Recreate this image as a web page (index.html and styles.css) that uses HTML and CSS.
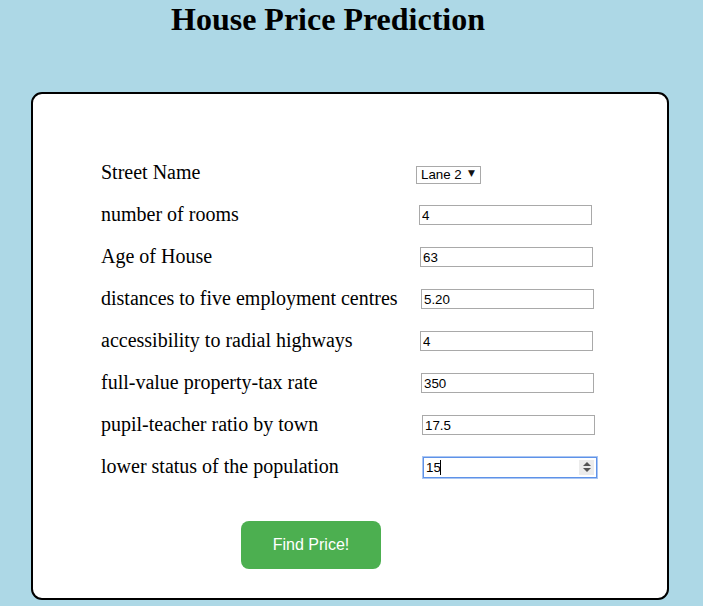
FILE: index.html
```html
<!DOCTYPE html>
<html lang="en">
<head>
<meta charset="utf-8">
<title>House Price Prediction</title>
<link rel="stylesheet" href="styles.css">
</head>
<body>
<h1 class="title">House Price Prediction</h1>
<div class="card">
  <form class="form">
    <div class="row">
      <label class="label">Street Name</label>
      <span class="select-wrap">
        <select class="select"><option>Lane 2</option></select>
        <span class="select-arrow">&#9660;</span>
      </span>
    </div>
    <div class="row">
      <label class="label">number of rooms</label>
      <input class="field s0" type="text" value="4">
    </div>
    <div class="row">
      <label class="label">Age of House</label>
      <input class="field s1" type="text" value="63">
    </div>
    <div class="row">
      <label class="label">distances to five employment centres</label>
      <input class="field s2" type="text" value="5.20">
    </div>
    <div class="row">
      <label class="label">accessibility to radial highways</label>
      <input class="field s1" type="text" value="4">
    </div>
    <div class="row">
      <label class="label">full-value property-tax rate</label>
      <input class="field s2" type="text" value="350">
    </div>
    <div class="row">
      <label class="label">pupil-teacher ratio by town</label>
      <input class="field s3" type="text" value="17.5">
    </div>
    <div class="row">
      <label class="label">lower status of the population</label>
      <span class="focus-wrap s4">
        <input class="field focused" type="text" value="15">
        <span class="caret"></span>
        <span class="spinner"><span class="up"></span><span class="down"></span></span>
      </span>
    </div>
    <div class="actions">
      <button class="btn" type="button">Find Price!</button>
    </div>
  </form>
</div>
</body>
</html>
```
FILE: styles.css
```css
html, body {
  margin: 0;
  padding: 0;
}
body {
  background: #add8e6;
  font-family: "Liberation Serif", "Times New Roman", serif;
  color: #000;
  width: 703px;
  height: 606px;
  overflow: hidden;
}
.title {
  width: 640px;
  margin: 0 0 0 8px;
  padding-top: 1px;
  text-align: center;
  font-size: 32px;
  line-height: 37px;
  font-weight: bold;
}
.card {
  box-sizing: border-box;
  width: 638px;
  height: 508px;
  margin: 54px 0 0 31px;
  border: 2px solid #000;
  border-radius: 11px;
  background: #fff;
  padding: 58px 0 0 68px;
}
.form {
  display: flex;
  flex-direction: column;
}
.row {
  display: grid;
  grid-template-columns: 316px auto;
  align-items: center;
  height: 42px;
}
.label {
  font-size: 20px;
  line-height: 22px;
  margin-top: -2px;
}
.select-wrap {
  position: relative;
  display: inline-block;
  width: 65px;
  height: 18px;
  margin-left: -1px;
  margin-top: 2px;
}
.select {
  -webkit-appearance: none;
  appearance: none;
  box-sizing: border-box;
  width: 65px;
  height: 18px;
  border: 1px solid #a9a9a9;
  border-radius: 0;
  background: #fff;
  font-family: "Liberation Sans", Arial, sans-serif;
  font-size: 13.33px;
  color: #000;
  padding: 0 0 0 4px;
  margin: 0;
  line-height: 16px;
}
.select-arrow {
  position: absolute;
  right: 6px;
  top: 3px;
  font-size: 9px;
  line-height: 10px;
  color: #111;
  font-family: "DejaVu Sans", sans-serif;
  pointer-events: none;
}
.field {
  box-sizing: border-box;
  width: 173px;
  height: 20px;
  border: 1px solid #a9a9a9;
  padding: 0 2px;
  margin: 0;
  font-family: "Liberation Sans", Arial, sans-serif;
  font-size: 13.33px;
  color: #000;
  background: #fff;
  outline: none;
}
.s0 { margin-left: 2px; }
.s1 { margin-left: 3px; }
.s2 { margin-left: 4px; }
.s3 { margin-left: 5px; }
.s4 { margin-left: 6px; }
.focus-wrap {
  position: relative;
  display: inline-block;
  width: 174px;
  height: 21px;
  margin-top: 0;
}
.focus-wrap .field.focused {
  width: 174px;
  height: 21px;
  margin: 0;
  border: 1px solid #5e92e8;
  box-shadow: 0 0 0 1px #aac6f3;
}
.caret {
  position: absolute;
  left: 17px;
  top: 3px;
  width: 1px;
  height: 15px;
  background: #000;
}
.spinner {
  position: absolute;
  right: 3px;
  top: 3px;
  width: 15px;
  height: 15px;
  background: #ececec;
  display: flex;
  flex-direction: column;
  align-items: center;
  justify-content: center;
  gap: 2px;
}
.up {
  width: 0;
  height: 0;
  border-left: 4px solid transparent;
  border-right: 4px solid transparent;
  border-bottom: 4px solid #555;
}
.down {
  width: 0;
  height: 0;
  border-left: 4px solid transparent;
  border-right: 4px solid transparent;
  border-top: 4px solid #555;
}
.actions {
  padding: 33px 0 0 140px;
}
.btn {
  width: 140px;
  height: 48px;
  border: none;
  border-radius: 8px;
  background: #4caf50;
  color: #fff;
  font-family: "Liberation Sans", Arial, sans-serif;
  font-size: 16px;
  padding: 0;
  cursor: pointer;
}
```
